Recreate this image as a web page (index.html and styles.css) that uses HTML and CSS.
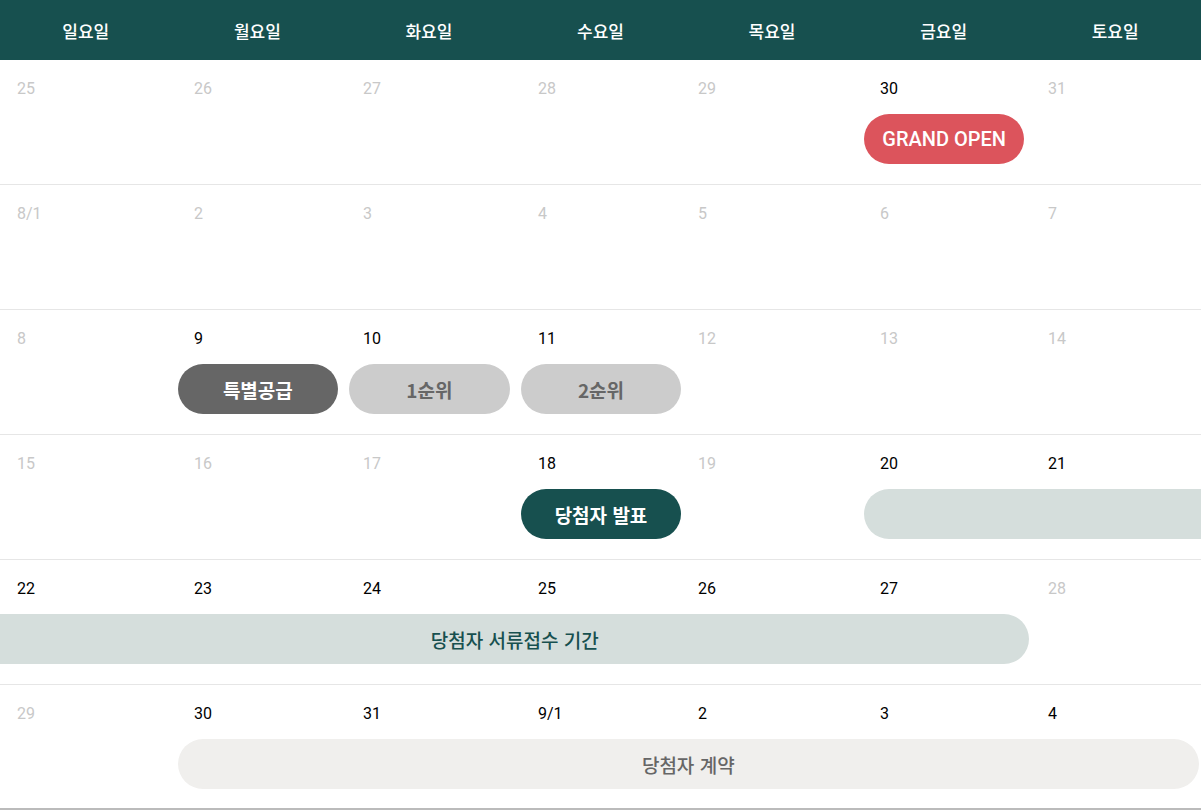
FILE: index.html
```html
<!DOCTYPE html>
<html lang="ko">
<head>
    <meta charset="UTF-8">
    <meta name="viewport" content="width=device-width, initial-scale=1.0">
    <title>청약 일정</title>
    <link rel="stylesheet" href="styles.css">
</head>
<body>
    <div class="calendar">
        <div class="week-head">
            <div>일요일</div>
            <div>월요일</div>
            <div>화요일</div>
            <div>수요일</div>
            <div>목요일</div>
            <div>금요일</div>
            <div>토요일</div>
        </div>

        <div class="week">
            <div class="dates">
                <span class="off">25</span>
                <span class="off">26</span>
                <span class="off">27</span>
                <span class="off">28</span>
                <span class="off">29</span>
                <span>30</span>
                <span class="off">31</span>
            </div>
            <div class="events">
                <div class="pill open" style="grid-column: 6;">GRAND OPEN</div>
            </div>
        </div>

        <div class="week">
            <div class="dates">
                <span class="off">8/1</span>
                <span class="off">2</span>
                <span class="off">3</span>
                <span class="off">4</span>
                <span class="off">5</span>
                <span class="off">6</span>
                <span class="off">7</span>
            </div>
            <div class="events"></div>
        </div>

        <div class="week">
            <div class="dates">
                <span class="off">8</span>
                <span>9</span>
                <span>10</span>
                <span>11</span>
                <span class="off">12</span>
                <span class="off">13</span>
                <span class="off">14</span>
            </div>
            <div class="events">
                <div class="pill special" style="grid-column: 2;">특별공급</div>
                <div class="pill rank" style="grid-column: 3;">1순위</div>
                <div class="pill rank" style="grid-column: 4;">2순위</div>
            </div>
        </div>

        <div class="week">
            <div class="dates">
                <span class="off">15</span>
                <span class="off">16</span>
                <span class="off">17</span>
                <span>18</span>
                <span class="off">19</span>
                <span>20</span>
                <span>21</span>
            </div>
            <div class="events">
                <div class="pill winner" style="grid-column: 4;">당첨자 발표</div>
                <div class="pill docs cont-right" style="grid-column: 6 / 8;"></div>
            </div>
        </div>

        <div class="week">
            <div class="dates">
                <span>22</span>
                <span>23</span>
                <span>24</span>
                <span>25</span>
                <span>26</span>
                <span>27</span>
                <span class="off">28</span>
            </div>
            <div class="events">
                <div class="pill docs cont-left" style="grid-column: 1 / 7;">당첨자 서류접수 기간</div>
            </div>
        </div>

        <div class="week last">
            <div class="dates">
                <span class="off">29</span>
                <span>30</span>
                <span>31</span>
                <span>9/1</span>
                <span>2</span>
                <span>3</span>
                <span>4</span>
            </div>
            <div class="events">
                <div class="pill contract" style="grid-column: 2 / 8;">당첨자 계약</div>
            </div>
        </div>
    </div>
</body>
</html>
```

FILE: styles.css
```css
body {
    margin: 0;
    background: #fff;
    font-family: Roboto, "Noto Sans CJK KR", sans-serif;
    color: #000;
    overflow: hidden;
}

.calendar {
    width: 1201px;
}

.week-head {
    display: grid;
    grid-template-columns: repeat(7, 1fr);
    height: 60px;
    background-color: #17504f;
    color: #fff;
    font-family: "Noto Sans CJK KR", sans-serif;
    font-size: 17px;
    font-weight: 500;
}

.week-head div {
    display: flex;
    align-items: center;
    justify-content: center;
}

.week {
    height: 125px;
    box-sizing: border-box;
    border-bottom: 1px solid #e6e6e6;
    overflow: hidden;
}

.week.last {
    border-bottom: 2px solid #bbb;
}

.dates {
    display: grid;
    grid-template-columns: 177px 169px 175px 160px 182px 168px 1fr;
    padding: 19px 0 0 17px;
    height: 36px;
    box-sizing: border-box;
    font-size: 16px;
    line-height: 20px;
}

.dates .off {
    color: #c8c8c8;
}

.events {
    display: grid;
    grid-template-columns: repeat(7, 1fr);
    margin-top: 18px;
    height: 50px;
}

.pill {
    grid-row: 1;
    display: flex;
    align-items: center;
    justify-content: center;
    height: 50px;
    margin: 0 5px 0 6px;
    border-radius: 25px;
    font-family: "Noto Sans CJK KR", sans-serif;
    font-size: 19px;
    font-weight: 700;
}

.pill.open {
    background-color: #dc545c;
    color: #fff;
    font-family: Roboto, sans-serif;
    font-size: 20px;
    font-weight: 500;
}

.pill.special {
    background-color: #666;
    color: #fff;
}

.pill.rank {
    background-color: #ccc;
    color: #666;
}

.pill.winner {
    background-color: #17504f;
    color: #fff;
}

.pill.docs {
    background-color: #d5dedc;
    color: #17504f;
    font-weight: 500;
}

.pill.cont-right {
    margin-right: -30px;
    border-radius: 25px 0 0 25px;
}

.pill.cont-left {
    margin: 0;
    border-radius: 0 25px 25px 0;
}

.pill.contract {
    background-color: #f0efed;
    color: #666;
    font-weight: 500;
    margin-right: 2px;
}
```
